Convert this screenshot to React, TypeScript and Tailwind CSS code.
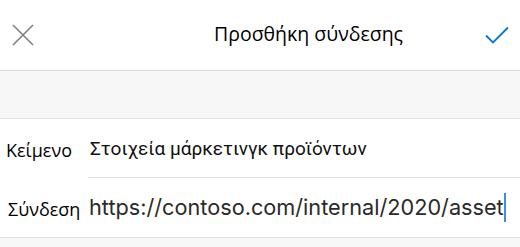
import React from "react";

const App = () => {
	return (
		<div className="w-[520px] h-[247px] bg-[#f7f7f7] overflow-hidden font-['Roboto',sans-serif]">
			<div className="flex items-center h-[71px] bg-white border-b border-[#dadada]">
				<svg className="ml-[12px]" width="22" height="22" viewBox="0 0 22 22">
					<path d="M1 1 L21 21 M21 1 L1 21" stroke="#808080" strokeWidth="1.6" fill="none" />
				</svg>
				<div className="ml-[180px] text-[19.5px] text-black font-['Open_Sans',sans-serif] -mt-[2px]">
					Προσθήκη σύνδεσης
				</div>
				<svg className="ml-auto mr-[11px]" width="24" height="18" viewBox="0 0 24 18">
					<path d="M1 9.5 L8 16.5 L23 1.5" stroke="#0078d4" strokeWidth="1.8" fill="none" />
				</svg>
			</div>
			<div className="h-[47px]" />
			<div className="bg-white border-y border-[#e1e1e1]">
				<div className="flex items-center h-[59px]">
					<div className="w-[88px] pl-[6px] pt-[4px] text-[18px] text-black font-['Open_Sans',sans-serif]">
						Κείμενο
					</div>
					<div className="flex-1 h-full flex items-center pl-[2px] pt-[3px] border-b border-[#e1e1e1] text-[19px] text-[#111]">
						Στοιχεία μάρκετινγκ προϊόντων
					</div>
				</div>
				<div className="flex items-center h-[59px]">
					<div className="w-[88px] pl-[8px] pt-[4px] text-[18px] text-black font-['Open_Sans',sans-serif]">
						Σύνδεση
					</div>
					<div className="flex-1 flex items-center pl-[1px] text-[21.7px] text-[#2a2a2a] font-['Inter',sans-serif]">
						<span>https://contoso.com/internal/2020/asset</span>
						<span className="w-[2px] h-[29px] bg-[#3d8fe0]" />
					</div>
				</div>
			</div>
		</div>
	);
};

export default App;
